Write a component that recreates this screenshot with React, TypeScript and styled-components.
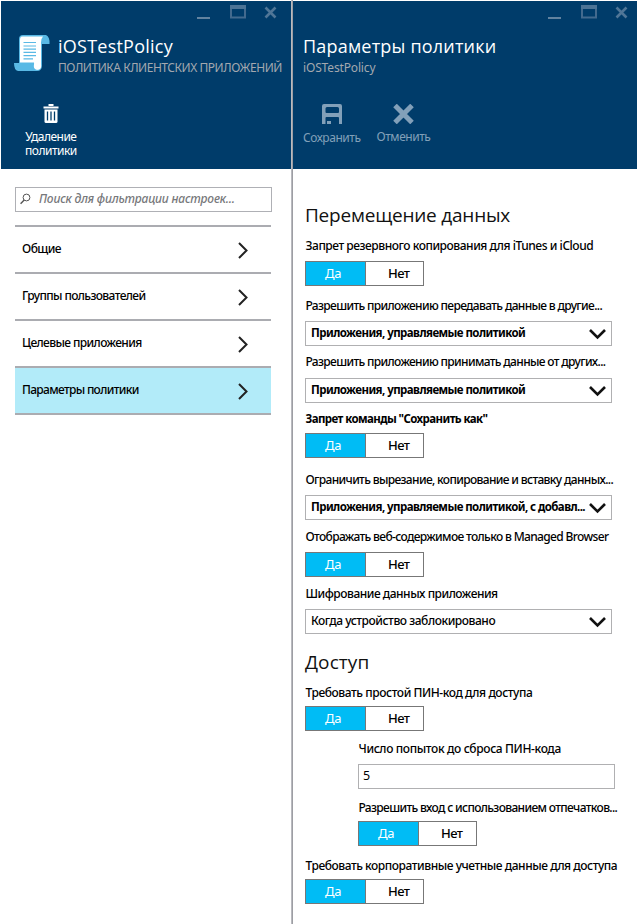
import React from "react";
import styled, { createGlobalStyle } from "styled-components";

const GlobalStyle = createGlobalStyle`
  * { box-sizing: border-box; }
  body { margin: 0; background: #fff; font-family: "Noto Sans", "Open Sans", sans-serif; color: #000; }
  button, input { font-family: inherit; }
`;

const Page = styled.div`
  display: flex;
  width: 638px;
  height: 924px;
  padding: 1px 1px 0;
  overflow: hidden;
`;
const Blade = styled.section<{ $width: number }>`
  width: ${(p) => p.$width}px;
  flex: none;
`;
const Divider = styled.div`
  flex: none;
  width: 2px;
  margin-top: -1px;
  background: linear-gradient(90deg, #b9babf 50%, #9d9ea3 50%);
`;
const Header = styled.header<{ $left: number }>`
  display: flex;
  flex-direction: column;
  height: 168px;
  padding-left: ${(p) => p.$left}px;
  background: #003c6a;
  color: #fff;
`;
const WindowBar = styled.div<{ $right: number }>`
  display: flex;
  justify-content: flex-end;
  height: 31px;
  padding: 3px ${(p) => p.$right}px 0 0;
`;
const Identity = styled.div`
  display: flex;
  gap: 8px;
  height: 66px;
`;
const Titles = styled.div`
  display: flex;
  flex-direction: column;
  padding-top: 1px;
`;
const Title = styled.h1<{ $ls: number }>`
  margin: 0;
  font: 400 18px/26px "Open Sans", "Noto Sans", sans-serif;
  letter-spacing: ${(p) => p.$ls}px;
  white-space: nowrap;
`;
const Subtitle = styled.div<{ $ls: number }>`
  padding-top: 1px;
  font-size: 12px;
  line-height: 16px;
  color: #a3a8af;
  letter-spacing: ${(p) => p.$ls}px;
  white-space: nowrap;
`;
const Actions = styled.div<{ $gap: number; $indent: number }>`
  display: flex;
  gap: ${(p) => p.$gap}px;
  padding-left: ${(p) => p.$indent}px;
  padding-top: 6px;
`;
const Action = styled.button<{ $ls: number; $muted?: boolean; $gap: number }>`
  display: flex;
  flex-direction: column;
  align-items: center;
  gap: ${(p) => p.$gap}px;
  padding: 0;
  border: 0;
  background: none;
  color: ${(p) => (p.$muted ? "#82a0b9" : "#fff")};
  font-size: 12px;
  line-height: 14px;
  letter-spacing: ${(p) => p.$ls}px;
  white-space: pre-line;
`;

const Menu = styled.div`
  padding: 18px 20px 0 14px;
`;
const Search = styled.label`
  display: flex;
  align-items: center;
  gap: 8px;
  width: 257px;
  height: 25px;
  padding: 0 0 2px 4px;
  border: 1px solid #afb0b5;
`;
const SearchInput = styled.input`
  width: 215px;
  padding: 0;
  border: 0;
  outline: 0;
  font-size: 12px;
  font-style: italic;
  letter-spacing: -0.19px;
  &::placeholder { color: #77787b; opacity: 1; font-weight: 500; }
`;
const Nav = styled.nav`
  width: 256px;
  margin-top: 13px;
  border-top: 2px solid #abacb1;
`;
const NavItem = styled.a<{ $ls: number; $active?: boolean }>`
  display: flex;
  justify-content: space-between;
  height: 47px;
  padding: 14px 23px 0 7px;
  border-bottom: 2px solid #abacb1;
  background: ${(p) => (p.$active ? "#b2ebf9" : "#fff")};
  font-size: 12px;
  font-weight: 500;
  line-height: 16px;
  letter-spacing: ${(p) => p.$ls}px;
`;

const Settings = styled.div`
  display: flex;
  flex-direction: column;
  align-items: flex-start;
  padding: 33px 0 0 12px;
`;
const SectionTitle = styled.h2<{ $top: number; $ls: number }>`
  margin: ${(p) => p.$top}px 0 10px;
  font: 400 19px/26px "Open Sans", "Noto Sans", sans-serif;
  letter-spacing: ${(p) => p.$ls}px;
  color: #111;
`;
const Field = styled.div<{ $top?: number; $gap?: number; $indent?: boolean }>`
  display: flex;
  flex-direction: column;
  gap: ${(p) => p.$gap ?? 7}px;
  margin: ${(p) => p.$top ?? 0}px 0 0 ${(p) => (p.$indent ? 53 : 0)}px;
`;
const Label = styled.div<{ $ls: number; $bold?: boolean }>`
  height: 16px;
  padding-left: 0.5px;
  font-size: ${(p) => (p.$bold ? 11.5 : 12)}px;
  line-height: 16px;
  font-weight: ${(p) => (p.$bold ? 700 : 500)};
  letter-spacing: ${(p) => p.$ls}px;
  white-space: nowrap;
`;
const Switch = styled.div`
  display: grid;
  grid-template-columns: 60px 57px;
  width: 119px;
  height: 25px;
  border: 1px solid #777;
  font-size: 13px;
  line-height: 22px;
`;
const On = styled.span`
  padding-left: 19px;
  border-right: 1px solid #777;
  background: #00bcf5;
  color: #fff;
  letter-spacing: -0.3px;
`;
const Off = styled.span`
  padding-left: 22px;
  font-weight: 500;
  letter-spacing: -0.6px;
`;
const Select = styled.div<{ $ls: number; $bold?: boolean }>`
  display: flex;
  justify-content: space-between;
  width: 307px;
  height: 25px;
  padding: 0 5px;
  border: 1px solid #b0b0b2;
  font-size: ${(p) => (p.$bold ? 11.5 : 12)}px;
  line-height: 21px;
  font-weight: ${(p) => (p.$bold ? 700 : 500)};
  letter-spacing: ${(p) => p.$ls}px;
  white-space: nowrap;
`;
const SelectArrow = styled.svg`
  margin-top: 7px;
  flex: none;
`;
const NavArrow = styled.svg`
  margin-top: 1px;
`;
const NumberInput = styled.input`
  width: 257px;
  height: 25px;
  padding: 0 4px 2px;
  border: 1px solid #b0b0b2;
  outline: 0;
  font-size: 12.5px;
`;
const Scroll = styled.svg`
  margin-top: 3px;
`;

const WindowControls = ({ right }: { right: number }) => (
  <WindowBar $right={right}>
    <svg width="81" height="16" viewBox="0 0 81 16">
      <path d="M0 14h13" stroke="#6283a0" strokeWidth="2" />
      <path d="M34 3.3v10.2h14V3.3" fill="none" stroke="#436a8e" strokeWidth="2" />
      <path d="M33 3h16" stroke="#4d7496" strokeWidth="4" />
      <path d="M68.5 3.5l10 10M78.5 3.5l-10 10" stroke="#507697" strokeWidth="2.6" />
    </svg>
  </WindowBar>
);
const ScrollIcon = () => (
  <Scroll width="36" height="37" viewBox="0 0 36 37">
    <path d="M9 0h23q4 2 3.500 9H28v21q0 6-5 6H4q-4-1-4-8h5V4q0-4 4-4z" fill="#59b9e5" />
    <path d="M8 1.500h21q-2 2-2 6v21q0 6-4 6-3 0-3-7H6V5q0-3.500 2-3.500z" fill="#fff" />
    <path d="M9.500 7.500H22M9.500 11H22M9.500 14.200H22M9.500 17.400H22M9.500 20.600H22M9.500 23.800H19" stroke="#59b9e5" strokeWidth="1.200" />
    <circle cx="23.500" cy="31" r="3.700" fill="#fff" />
  </Scroll>
);
const TrashIcon = () => (
  <svg width="16" height="20" viewBox="0 0 16 20">
    <path d="M5.500 1h5M.5 3.500h15" stroke="#fff" strokeWidth="2" />
    <path d="M1.500 5.500h13V17.500q0 1.500-1.500 1.500H3Q1.500 19 1.500 17.500z" fill="#fff" />
    <path d="M4.500 7.500v9M8 7.500v9M11.500 7.500v9" stroke="#003c6a" strokeWidth="1.300" />
  </svg>
);
const SaveIcon = () => (
  <svg width="20" height="20" viewBox="0 0 20 20">
    <path
      fillRule="evenodd"
      fill="currentColor"
      d="M2 0h16q2 0 2 2v18h-3v-6q0-1-1-1H4.500q-1 0-1 1v6H0V2Q0 0 2 0zM5 3Q3.500 3 3.500 4.500V8Q3.500 9 4.500 9H16q1 0 1-1V4.500Q17 3 15.500 3z"
    />
    <path d="M5 17h4v3H5z" fill="currentColor" />
  </svg>
);
const DiscardIcon = () => (
  <svg width="21" height="20" viewBox="0 0 21 20">
    <path d="M2 1.500l17 17M19 1.500l-17 17" stroke="currentColor" strokeWidth="5" />
  </svg>
);
const Toggle = () => (
  <Switch>
    <On>Да</On>
    <Off>Нет</Off>
  </Switch>
);
const Dropdown = ({ value, ls, bold }: { value: string; ls: number; bold?: boolean }) => (
  <Select $ls={ls} $bold={bold}>
    {value}
    <SelectArrow width="17" height="11" viewBox="0 0 17 11">
      <path d="M1 1l7.500 7.500L16 1" fill="none" stroke="#111" strokeWidth="2.600" />
    </SelectArrow>
  </Select>
);

const navItems = [
  { text: "Общие", ls: -0.56 },
  { text: "Группы пользователей", ls: -0.62 },
  { text: "Целевые приложения", ls: -0.61 },
  { text: "Параметры политики", ls: -0.68, active: true },
];

export default function App() {
  return (
    <>
      <GlobalStyle />
      <Page>
        <Blade $width={290}>
          <Header $left={13}>
            <WindowControls right={13} />
            <Identity>
              <ScrollIcon />
              <Titles>
                <Title $ls={0.24}>iOSTestPolicy</Title>
                <Subtitle $ls={-0.46}>ПОЛИТИКА КЛИЕНТСКИХ ПРИЛОЖЕНИЙ</Subtitle>
              </Titles>
            </Identity>
            <Actions $gap={0} $indent={11}>
              <Action $ls={-0.5} $gap={6}>
                <TrashIcon />
                {"Удаление\nполитики"}
              </Action>
            </Actions>
          </Header>
          <Menu>
            <Search>
              <svg width="11" height="12" viewBox="0 0 11 12">
                <circle cx="6.500" cy="4.500" r="3.400" fill="none" stroke="#555" />
                <path d="M4.200 7L.6 10.800" stroke="#555" strokeWidth="1.400" />
              </svg>
              <SearchInput placeholder="Поиск для фильтрации настроек..." />
            </Search>
            <Nav>
              {navItems.map((n) => (
                <NavItem key={n.text} $ls={n.ls} $active={n.active}>
                  {n.text}
                  <NavArrow width="10" height="17" viewBox="0 0 10 17">
                    <path d="M1 1l7.500 7.500L1 16" fill="none" stroke="#222" strokeWidth="2" />
                  </NavArrow>
                </NavItem>
              ))}
            </Nav>
          </Menu>
        </Blade>
        <Divider />
        <Blade $width={344}>
          <Header $left={10}>
            <WindowControls right={8} />
            <Identity>
              <Titles>
                <Title $ls={0.2}>Параметры политики</Title>
                <Subtitle $ls={-0.15}>iOSTestPolicy</Subtitle>
              </Titles>
            </Identity>
            <Actions $gap={16} $indent={0}>
              <Action $ls={-0.45} $muted $gap={7}>
                <SaveIcon />
                Сохранить
              </Action>
              <Action $ls={-0.45} $muted $gap={6}>
                <DiscardIcon />
                Отменить
              </Action>
            </Actions>
          </Header>
          <Settings>
            <SectionTitle $top={0} $ls={-0.21}>Перемещение данных</SectionTitle>
            <Field>
              <Label $ls={-0.46}>Запрет резервного копирования для iTunes и iCloud</Label>
              <Toggle />
            </Field>
            <Field $top={12}>
              <Label $ls={-0.65}>Разрешить приложению передавать данные в другие...</Label>
              <Dropdown bold ls={-0.56} value="Приложения, управляемые политикой" />
            </Field>
            <Field $top={8} $gap={8}>
              <Label $ls={-0.65}>Разрешить приложению принимать данные от других...</Label>
              <Dropdown bold ls={-0.56} value="Приложения, управляемые политикой" />
            </Field>
            <Field $top={8} $gap={6}>
              <Label $bold $ls={-0.6}>Запрет команды "Сохранить как"</Label>
              <Toggle />
            </Field>
            <Field $top={14}>
              <Label $ls={-0.65}>Ограничить вырезание, копирование и вставку данных...</Label>
              <Dropdown bold ls={-0.57} value="Приложения, управляемые политикой, с добавл..." />
            </Field>
            <Field $top={9}>
              <Label $ls={-0.65}>Отображать веб-содержимое только в Managed Browser</Label>
              <Toggle />
            </Field>
            <Field $top={9}>
              <Label $ls={-0.48}>Шифрование данных приложения</Label>
              <Dropdown ls={-0.45} value="Когда устройство заблокировано" />
            </Field>
            <SectionTitle $top={15} $ls={0.1}>Доступ</SectionTitle>
            <Field $gap={5}>
              <Label $ls={-0.43}>Требовать простой ПИН-код для доступа</Label>
              <Toggle />
            </Field>
            <Field $top={10} $indent>
              <Label $ls={-0.36}>Число попыток до сброса ПИН-кода</Label>
              <NumberInput defaultValue="5" />
            </Field>
            <Field $top={11} $gap={5} $indent>
              <Label $ls={-0.65}>Разрешить вход с использованием отпечатков...</Label>
              <Toggle />
            </Field>
            <Field $top={12} $gap={5}>
              <Label $ls={-0.45}>Требовать корпоративные учетные данные для доступа</Label>
              <Toggle />
            </Field>
          </Settings>
        </Blade>
      </Page>
    </>
  );
}
